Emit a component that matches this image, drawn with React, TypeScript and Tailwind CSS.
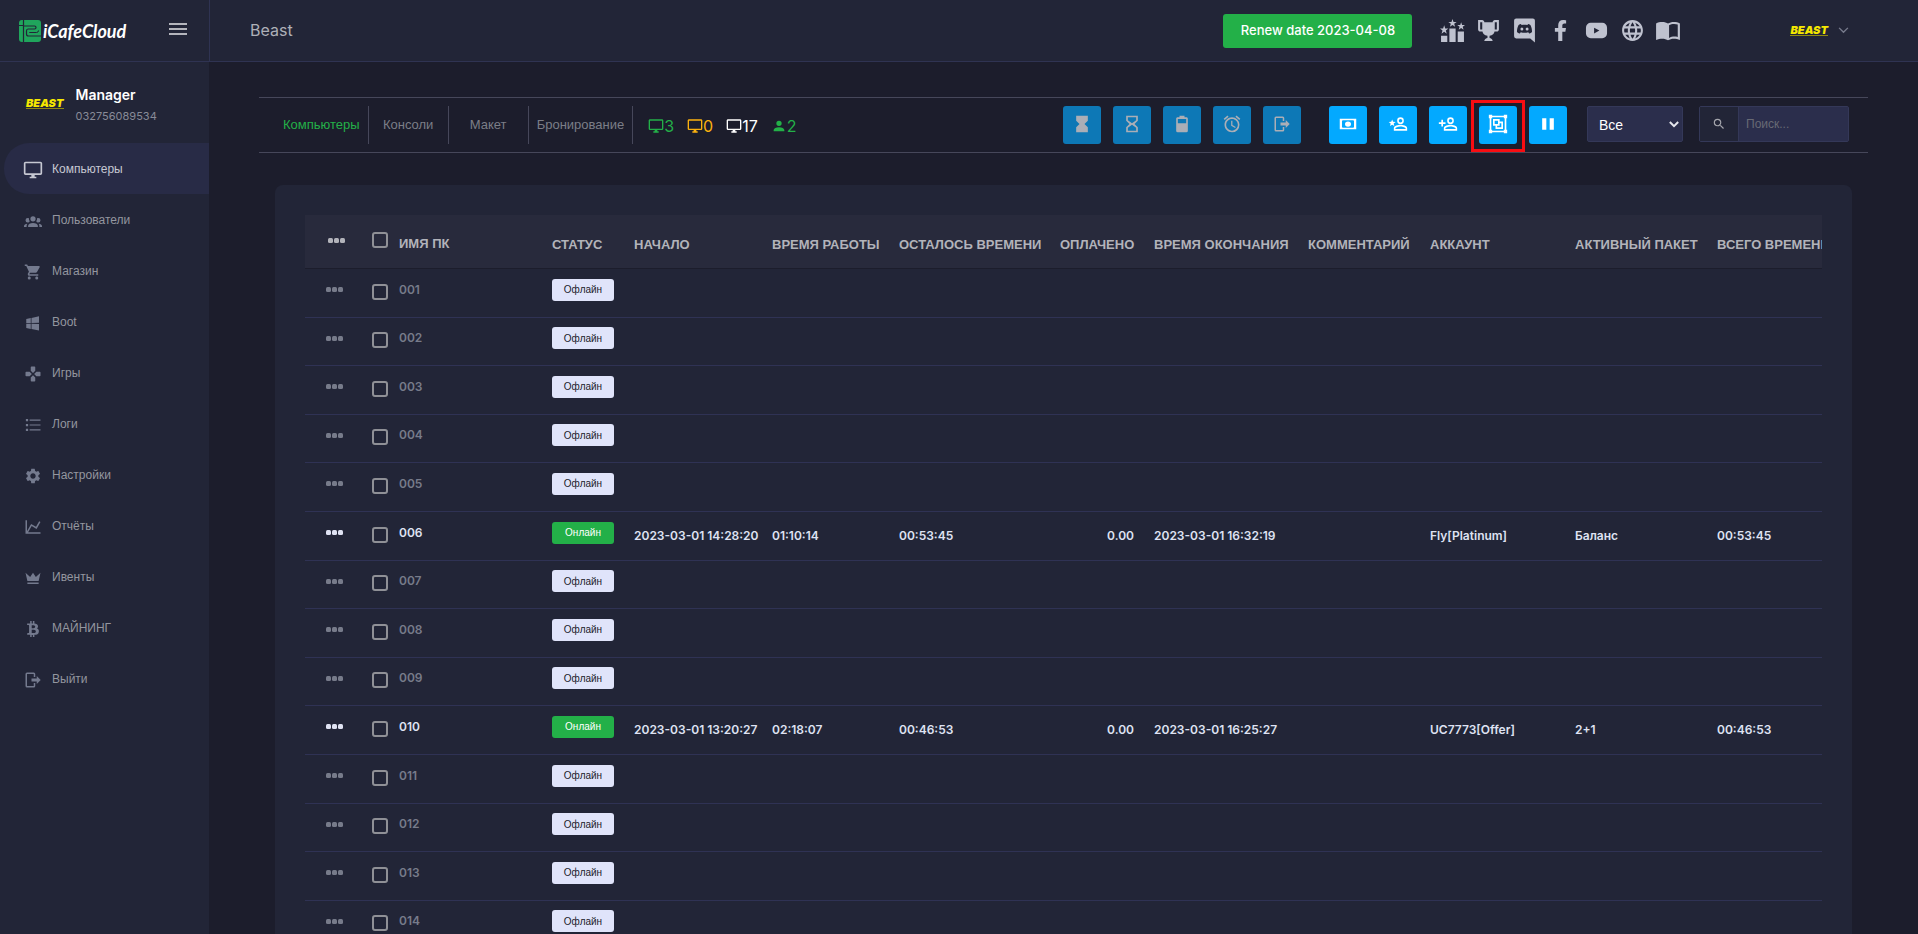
import {useState} from "react";
import type {ReactNode} from "react";
import {MdAlarm, MdLanguage, MdSearch, MdSettings} from "react-icons/md";
import {FaBtc, FaFacebookF} from "react-icons/fa";

const paths = {
    monitor: "M21,16H3V4H21M21,2H3C1.89,2 1,2.89 1,4V16A2,2 0 0,0 3,18H10V20H8V22H16V20H14V18H21A2,2 0 0,0 23,16V4C23,2.89 22.1,2 21,2Z",
    users: "M12,5.5A3.5,3.5 0 0,1 15.5,9A3.5,3.5 0 0,1 12,12.5A3.5,3.5 0 0,1 8.5,9A3.5,3.5 0 0,1 12,5.5M5,8C5.56,8 6.08,8.15 6.53,8.42C6.38,9.85 6.8,11.27 7.66,12.38C7.16,13.34 6.16,14 5,14A3,3 0 0,1 2,11A3,3 0 0,1 5,8M19,8A3,3 0 0,1 22,11A3,3 0 0,1 19,14C17.84,14 16.84,13.34 16.34,12.38C17.2,11.27 17.62,9.85 17.47,8.42C17.92,8.15 18.44,8 19,8M5.5,18.25C5.5,16.18 8.41,14.5 12,14.5C15.59,14.5 18.5,16.18 18.5,18.25V20H5.5V18.25M0,20V18.5C0,17.11 1.89,15.94 4.45,15.6C3.86,16.28 3.5,17.22 3.5,18.25V20H0M24,20H20.5V18.25C20.5,17.22 20.14,16.28 19.55,15.6C22.11,15.94 24,17.11 24,18.5V20Z",
    cart: "M17,18C15.89,18 15,18.89 15,20A2,2 0 0,0 17,22A2,2 0 0,0 19,20C19,18.89 18.1,18 17,18M1,2V4H3L6.6,11.59L5.24,14.04C5.09,14.32 5,14.65 5,15A2,2 0 0,0 7,17H19V15H7.42A0.25,0.25 0 0,1 7.17,14.75C7.17,14.7 7.18,14.66 7.2,14.63L8.1,13H15.55C16.3,13 16.96,12.58 17.3,11.97L20.88,5.5C20.95,5.34 21,5.17 21,5A1,1 0 0,0 20,4H5.21L4.27,2M7,18C5.89,18 5,18.89 5,20A2,2 0 0,0 7,22A2,2 0 0,0 9,20C9,18.89 8.1,18 7,18Z",
    windows: "M3,12V6.75L9,5.43V11.91L3,12M20,3V11.75L10,11.9V5.21L20,3M3,13L9,13.09V19.9L3,18.75V13M20,13.25V22L10,20.09V13.1L20,13.25Z",
    games: "M16.5,9L13.5,12L16.5,15H21A1,1 0 0,0 22,14V10A1,1 0 0,0 21,9M9,16.5V21A1,1 0 0,0 10,22H14A1,1 0 0,0 15,21V16.5L12,13.5M7.5,9H3A1,1 0 0,0 2,10V14A1,1 0 0,0 3,15H7.5L10.5,12M15,7.5V3A1,1 0 0,0 14,2H10A1,1 0 0,0 9,3V7.5L12,10.5Z",
    list: "M2.5,4H5.5V7H2.5M7.5,4.8H22V6.4H7.5M2.5,10.5H5.5V13.5H2.5M7.5,11.2H22V12.8H7.5M2.5,17H5.5V20H2.5M7.5,17.7H22V19.3H7.5Z",
    chart: "M16,11.78L20.24,4.45L21.97,5.45L16.74,14.5L10.23,10.75L5.46,19H22V21H2V3H4V17.54L9.5,8L16,11.78Z",
    crown: "M4.5,16L2,5L8.2,10.5L12,5L15.8,10.5L22,5L19.5,16H4.5M19.5,18V20H4.5V18Z",
    logout: "M17,17.25V14H10V10H17V6.75L22.25,12L17,17.25M13,2A2,2 0 0,1 15,4V8H13V4H4V20H13V16H15V20A2,2 0 0,1 13,22H4A2,2 0 0,1 2,20V4A2,2 0 0,1 4,2H13Z",
    hourglassFull: "M5,2H19V8L15,12L19,16V22H5V16L9,12L5,8Z",
    hourglass: "M5,2H19V8L15,12L19,16V22H5V16L9,12L5,8ZM17,16.5L12,12.8L7,16.5V20H17ZM12,11.2L17,7.5V4H7V7.5Z",
    battery: "M16.7,4H15V2H9V4H7.3A1.8,1.8 0 0,0 5,5.8V20.2A1.8,1.8 0 0,0 6.8,22H17.2A1.8,1.8 0 0,0 19,20.2V5.8A1.8,1.8 0 0,0 16.7,4M17,11H7V6H17Z",
    cash: "M1,5H23V19H1V5M4,8V16A3,3 0 0,0 5,17H19A3,3 0 0,0 20,16V8A3,3 0 0,0 19,7H5A3,3 0 0,0 4,8M12,8.5A4,3.5 0 0,1 12,15.5A4,3.5 0 0,1 12,8.5Z",
    addUser: "M15,4A4,4 0 0,0 11,8A4,4 0 0,0 15,12A4,4 0 0,0 19,8A4,4 0 0,0 15,4M15,5.9C16.16,5.9 17.1,6.84 17.1,8C17.1,9.16 16.16,10.1 15,10.1A2.1,2.1 0 0,1 12.9,8A2.1,2.1 0 0,1 15,5.9M4,7V10H1V12H4V15H6V12H9V10H6V7H4M15,13C12.33,13 7,14.33 7,17V20H23V17C23,14.33 17.67,13 15,13M15,14.9C17.97,14.9 21.1,16.36 21.1,17V18.1H8.9V17C8.9,16.36 12,14.9 15,14.9Z",
    starUser: "M15,4A4,4 0 0,0 11,8A4,4 0 0,0 15,12A4,4 0 0,0 19,8A4,4 0 0,0 15,4M15,5.9C16.16,5.9 17.1,6.84 17.1,8C17.1,9.16 16.16,10.1 15,10.1A2.1,2.1 0 0,1 12.9,8A2.1,2.1 0 0,1 15,5.9M5,6.5L6.1,9.3L9.2,9.5L6.8,11.5L7.6,14.5L5,12.8L2.4,14.5L3.2,11.5L0.8,9.5L3.9,9.3ZM15,13C12.33,13 7,14.33 7,17V20H23V17C23,14.33 17.67,13 15,13M15,14.9C17.97,14.9 21.1,16.36 21.1,17V18.1H8.9V17C8.9,16.36 12,14.9 15,14.9Z",
    group: "M1,1H5V2H19V1H23V5H22V19H23V23H19V22H5V23H1V19H2V5H1V1M5,4V5H4V19H5V20H19V19H20V5H19V4H5M6,6H14V9H18V18H9V14H6V6M8,8V12H12V8H8M14,11V14H11V16H16V11H14Z",
    pause: "M14,19H19V5H14M5,19H10V5H5V19Z",
    account: "M12,4A4,4 0 0,1 16,8A4,4 0 0,1 12,12A4,4 0 0,1 8,8A4,4 0 0,1 12,4M12,14C16.42,14 20,15.79 20,18V20H4V18C4,15.79 7.58,14 12,14Z",
    ranking: "M1,17H7V23H1ZM9,10H15V23H9ZM17,13H23V23H17ZM4,7L5,10L8,10L5.6,12L6.5,15L4,13.2L1.5,15L2.4,12L0,10L3,10ZM12,1L13,3.8L16,3.8L13.6,5.6L14.5,8.5L12,6.8L9.5,8.5L10.4,5.6L8,3.8L11,3.8ZM20.3,4L21.2,6.7L24,6.7L21.8,8.5L22.6,11.3L20.3,9.6L18,11.3L18.8,8.5L16.6,6.7L19.4,6.7Z",
    trophy: "M20.2,2H19.5H18C17.1,2 16,3 16,4H8C8,3 6.9,2 6,2H4.5H3.8H2V11C2,12 3,13 4,13H6.2C6.6,15 7.9,16.7 11,17V19.08C8,19.54 8,22 8,22H16C16,22 16,19.54 13,19.08V17C16.1,16.7 17.4,15 17.8,13H20C21,13 22,12 22,11V2H20.2M4,11V4H6V11H4M20,11H18V4H20V11Z",
    discord: "M4,0.5H20A2,2 0 0,1 22,2.5V23.5L17.5,19.6H4A2,2 0 0,1 2,17.6V2.5A2,2 0 0,1 4,0.5M8.6,5.8C6.9,6.2 6.2,6.9 6.2,6.9C5.2,9 4.7,11.3 4.8,13.4C5.8,14.7 7.5,14.8 7.5,14.8L8.4,13.6C10.8,14.3 13.2,14.3 15.6,13.6L16.5,14.8C16.5,14.8 18.2,14.7 19.2,13.4C19.3,11.3 18.8,9 17.8,6.9C17.8,6.9 17.1,6.2 15.4,5.8L14.8,6.6C13,6.3 11,6.3 9.2,6.6ZM9.5,9A1.4,1.5 0 0,1 9.5,12A1.4,1.5 0 0,1 9.5,9M14.5,9A1.4,1.5 0 0,1 14.5,12A1.4,1.5 0 0,1 14.5,9Z",
    youtube: "M6,4H18A5,5 0 0,1 23,9V15A5,5 0 0,1 18,20H6A5,5 0 0,1 1,15V9A5,5 0 0,1 6,4M9.5,9V15L15,12Z",
    book: "M12,5C10.9,4.2 8.7,3.6 6.7,3.6C4.6,3.6 2.5,4 1,5V20.2C2.8,19.4 4.8,19.1 6.7,19.1C8.7,19.1 10.6,19.6 12,20.6C13.7,19.6 15.3,19.1 17.3,19.1C19.3,19.1 21.3,19.4 23,20.2V5C21.5,4 19.4,3.6 17.3,3.6C15.3,3.6 13.4,4.2 12,5M21,17.5C18,16.8 15.2,17.2 13,18.4V6.6C15,5.4 18.5,5.2 21,6Z",
};

type IconName = keyof typeof paths;

function Icon({name, className}: {name: IconName, className: string}){
    return (
        <svg viewBox="0 0 24 24" fill="currentColor" fillRule="evenodd" className={className} aria-hidden="true">
            <path d={paths[name]}/>
        </svg>
    );
}

function BeastLogo(){
    return (
        <span className="inline-block border-b border-[#8f8a12] font-['Inter',sans-serif] text-[11px] leading-[9px] font-black italic text-[#f5e800]">
            BEAST
        </span>
    );
}

const menu: {label: string, icon: ReactNode}[] = [
    {label: "Компьютеры", icon: <Icon name="monitor" className="size-5"/>},
    {label: "Пользователи", icon: <Icon name="users" className="size-[18px]"/>},
    {label: "Магазин", icon: <Icon name="cart" className="size-[18px]"/>},
    {label: "Boot", icon: <Icon name="windows" className="size-[18px]"/>},
    {label: "Игры", icon: <Icon name="games" className="size-[18px]"/>},
    {label: "Логи", icon: <Icon name="list" className="size-[18px]"/>},
    {label: "Настройки", icon: <MdSettings className="size-[18px]"/>},
    {label: "Отчёты", icon: <Icon name="chart" className="size-[18px]"/>},
    {label: "Ивенты", icon: <Icon name="crown" className="size-[18px]"/>},
    {label: "МАЙНИНГ", icon: <FaBtc className="size-4"/>},
    {label: "Выйти", icon: <Icon name="logout" className="size-[18px]"/>},
];

const tabs = ["Компьютеры", "Консоли", "Макет", "Бронирование"];

const links: {label: string, icon: ReactNode}[] = [
    {label: "Ranking", icon: <Icon name="ranking" className="size-[25px]"/>},
    {label: "Trophy", icon: <Icon name="trophy" className="size-[25px]"/>},
    {label: "Discord", icon: <Icon name="discord" className="size-[25px]"/>},
    {label: "Facebook", icon: <FaFacebookF className="size-[21px]"/>},
    {label: "YouTube", icon: <Icon name="youtube" className="size-[23px]"/>},
    {label: "Site", icon: <MdLanguage className="size-[25px]"/>},
    {label: "Docs", icon: <Icon name="book" className="size-[26px]"/>},
];

const sessionActions: {label: string, icon: ReactNode}[] = [
    {label: "Start", icon: <Icon name="hourglassFull" className="size-5"/>},
    {label: "Add time", icon: <Icon name="hourglass" className="size-5"/>},
    {label: "Package", icon: <Icon name="battery" className="size-5"/>},
    {label: "Timer", icon: <MdAlarm className="size-5"/>},
    {label: "Checkout", icon: <Icon name="logout" className="size-[18px]"/>},
];

const clubActions: {label: string, icon: ReactNode, marked?: boolean}[] = [
    {label: "Cash", icon: <Icon name="cash" className="size-[18px]"/>},
    {label: "Add member", icon: <Icon name="starUser" className="size-5"/>},
    {label: "Add guest", icon: <Icon name="addUser" className="size-5"/>},
    {label: "Group", icon: <Icon name="group" className="size-5"/>, marked: true},
    {label: "Pause", icon: <Icon name="pause" className="size-5"/>},
];

const columns = [
    {title: "СТАТУС", width: "w-[82px]"},
    {title: "НАЧАЛО", width: "w-[138px]"},
    {title: "ВРЕМЯ РАБОТЫ", width: "w-[127px]"},
    {title: "ОСТАЛОСЬ ВРЕМЕНИ", width: "w-[161px]"},
    {title: "ОПЛАЧЕНО", width: "w-[94px]"},
    {title: "ВРЕМЯ ОКОНЧАНИЯ", width: "w-[154px]"},
    {title: "КОММЕНТАРИЙ", width: "w-[122px]"},
    {title: "АККАУНТ", width: "w-[145px]"},
    {title: "АКТИВНЫЙ ПАКЕТ", width: "w-[142px]"},
    {title: "ВСЕГО ВРЕМЕНИ", width: "w-[160px]"},
];

// start, worked, left, paid, end, comment, account, package, total
const sessions: Record<string, string[]> = {
    "006": ["2023-03-01 14:28:20", "01:10:14", "00:53:45", "0.00", "2023-03-01 16:32:19", "", "Fly[Platinum]", "Баланс", "00:53:45"],
    "010": ["2023-03-01 13:20:27", "02:18:07", "00:46:53", "0.00", "2023-03-01 16:25:27", "", "UC7773[Offer]", "2+1", "00:46:53"],
};

const computers = Array.from({length: 14}, (_, i) => String(i + 1).padStart(3, "0"));

function Dots(){
    return (
        <svg viewBox="0 0 17 5" fill="currentColor" className="h-[5px] w-[17px]" aria-hidden="true">
            <rect width="5" height="5" rx="1.5"/>
            <rect x="6" width="5" height="5" rx="1.5"/>
            <rect x="12" width="5" height="5" rx="1.5"/>
        </svg>
    );
}

const checkboxClass = "size-4 shrink-0 appearance-none rounded-[3px] border-2 border-[#8f9096] checked:bg-[#03a9ff]";

function Header(){
    return (
        <header className="flex h-[62px] shrink-0 items-stretch border-b border-[#2f3352] bg-[#222537]">
            <div className="flex w-[210px] items-center justify-between border-r border-[#2f3352] pr-[22px] pb-3 pl-[19px]">
                <a href="#" className="flex items-center gap-0.5 pt-3 font-['Lato',sans-serif] text-lg leading-6 font-bold italic text-white">
                    <svg viewBox="0 0 22 22" className="size-[22px]" aria-hidden="true">
                        <rect width="22" height="22" rx="3" fill="#20a55c"/>
                        <path d="M4.5 0v22M0 5.5h4.5M4.5 6H15.5q1.5 0 1.5 1.5t-1.5 1.5H9q-1.5 0-1.5 2v3q0 2 2 2H22M4.5 0v6" fill="none" stroke="#222537" strokeWidth="1.2"/>
                        <path d="M10.5 13v-.5h7q2 0 2-2" fill="none" stroke="#222537" strokeWidth="1"/>
                    </svg>
                    iCafeCloud
                </a>
                <button aria-label="Menu" className="flex w-[18px] flex-col gap-[3px] pt-2">
                    <span className="h-0.5 w-full bg-[#b4b5bc]"/>
                    <span className="h-0.5 w-full bg-[#b4b5bc]"/>
                    <span className="h-0.5 w-full bg-[#b4b5bc]"/>
                </button>
            </div>
            <div className="flex flex-1 items-center justify-between pl-10 pr-[69px]">
                <h1 className="pb-0.5 font-['Inter',sans-serif] text-base text-[#aeb0b8]">Beast</h1>
                <div className="flex items-center">
                    <button className="h-[34px] w-[189px] rounded-[3px] bg-[#23b048] font-['Inter',sans-serif] text-[13px] font-medium text-white">
                        Renew date 2023-04-08
                    </button>
                    <nav className="ml-[22px] flex text-[#bfc2cf]">
                        {links.map((link) => (
                            <a key={link.label} href="#" aria-label={link.label} className="flex w-9 items-center justify-center">{link.icon}</a>
                        ))}
                    </nav>
                    <button className="ml-[104px] flex items-center gap-2.5">
                        <BeastLogo/>
                        <svg viewBox="0 0 12 8" className="h-[7px] w-[11px]" fill="none" stroke="#777b8c" strokeWidth="1.6" aria-hidden="true">
                            <path d="M1 1l5 5 5-5"/>
                        </svg>
                    </button>
                </div>
            </div>
        </header>
    );
}

function Sidebar(){
    return (
        <aside className="w-[209px] shrink-0 bg-[#222537] pt-[22px]">
            <div className="mb-5 flex h-[39px] items-center gap-3 pl-[26px]">
                <BeastLogo/>
                <div className="pt-0.5 font-['Inter',sans-serif]">
                    <div className="text-sm leading-[22px] font-semibold text-white">Manager</div>
                    <div className="text-[11px] leading-[20px] text-[#888b98]">032756089534</div>
                </div>
            </div>
            <nav className="pl-1">
                {menu.map((item, i) => (
                    <a
                        key={item.label}
                        href="#"
                        className={i === 0
                            ? "flex h-[51px] items-center rounded-l-[25px] bg-[#282b46] pl-[19px] text-xs text-[#c6c8d2]"
                            : "flex h-[51px] items-center pl-[19px] text-xs text-[#94969f]"}
                    >
                        <span className={i === 0 ? "mr-[9px] flex w-5 justify-center pt-0.5" : "mr-[9px] flex w-5 justify-center pt-0.5 text-[#747a8e]"}>{item.icon}</span>
                        {item.label}
                    </a>
                ))}
            </nav>
        </aside>
    );
}

function Toolbar(){
    const [tab, setTab] = useState(tabs[0]);
    const [filter, setFilter] = useState("Все");
    const [search, setSearch] = useState("");

    return (
        <div className="flex items-start border-y border-[#46475a] py-2 pr-[19px] pl-4">
            <div className="flex">
                {tabs.map((name) => (
                    <button
                        key={name}
                        onClick={() => setTab(name)}
                        className={name === tab
                            ? "h-[38px] min-w-20 border-r border-[#46475a] px-2 text-[13px] text-[#23b048]"
                            : "h-[38px] min-w-20 border-r border-[#46475a] px-2 text-[13px] text-[#7b7d87]"}
                    >
                        {name}
                    </button>
                ))}
            </div>
            <div className="flex h-[38px] items-center gap-[13px] pt-0.5 pl-[15px] font-['Inter',sans-serif] text-base">
                <span className="flex items-center text-[#23b048]"><Icon name="monitor" className="size-4"/>3</span>
                <span className="flex items-center text-[#fbb10f]"><Icon name="monitor" className="size-4"/>0</span>
                <span className="flex items-center text-white"><Icon name="monitor" className="size-4"/>17</span>
                <span className="flex items-center text-[#23b048]"><Icon name="account" className="size-4"/>2</span>
            </div>
            <div className="ml-auto flex gap-3">
                {sessionActions.map((action) => (
                    <button key={action.label} aria-label={action.label} className="flex size-[38px] items-center justify-center rounded-[3px] bg-[#0d78b6] pb-0.5 text-[#abaeb6]">
                        {action.icon}
                    </button>
                ))}
            </div>
            <div className="ml-7 flex gap-3">
                {clubActions.map((action) => (
                    <div key={action.label} className="relative">
                        <button aria-label={action.label} className="flex size-[38px] items-center justify-center rounded-[3px] bg-[#03a9ff] pb-0.5 text-white">
                            {action.icon}
                        </button>
                        {action.marked && <div className="pointer-events-none absolute -inset-x-2 -top-1.5 -bottom-2 border-[3px] border-[#f80d12]"/>}
                    </div>
                ))}
            </div>
            <div className="relative ml-5">
                <select
                    aria-label="Фильтр"
                    value={filter}
                    onChange={(e) => setFilter(e.target.value)}
                    className="h-9 w-24 appearance-none rounded-[2px] border border-[#343858] bg-[#2b2e4c] pt-0.5 pl-[11px] text-sm text-white"
                >
                    <option>Все</option>
                </select>
                <svg viewBox="0 0 12 8" className="pointer-events-none absolute top-[15px] right-1 h-[7px] w-2.5" fill="none" stroke="#e6e7ee" strokeWidth="2.4" aria-hidden="true">
                    <path d="M1 1l5 5 5-5"/>
                </svg>
            </div>
            <div className="ml-4 flex h-9 w-[150px] rounded-[2px] border border-[#343858]">
                <button aria-label="Найти" className="flex w-[39px] shrink-0 items-center justify-center border-r border-[#343858] bg-[#222537] text-[#a5a6ad]">
                    <MdSearch className="size-3.5"/>
                </button>
                <input
                    type="text"
                    aria-label="Поиск"
                    value={search}
                    onChange={(e) => setSearch(e.target.value)}
                    placeholder="Поиск..."
                    className="w-full min-w-0 bg-[#2b2e4c] px-[7px] text-xs text-white outline-none placeholder:text-[#686a74]"
                />
            </div>
        </div>
    );
}

function ComputerRow({name}: {name: string}){
    const session = sessions[name];

    return (
        <tr className={session
            ? "h-[49px] border-b border-[#2f3254] text-[#dfe2f2] nth-[5n+2]:h-12 nth-[5n+4]:h-12"
            : "h-[49px] border-b border-[#2f3254] text-[#777b8a] nth-[5n+2]:h-12 nth-[5n+4]:h-12"}>
            <td className="pb-1.5 pl-[21px]"><button aria-label={"Меню " + name} className="block"><Dots/></button></td>
            <td className="pb-0.5 pl-2.5">
                <label className="flex items-center gap-[11px] font-['Inter',sans-serif] text-xs font-semibold">
                    <input type="checkbox" className={checkboxClass}/>
                    <span className="pb-1">{name}</span>
                </label>
            </td>
            <td className="pb-1.5 pl-2.5">
                <span className={session
                    ? "flex h-[22px] w-[62px] items-center justify-center rounded-[3px] bg-[#23b048] text-[10px] text-white"
                    : "flex h-[22px] w-[62px] items-center justify-center rounded-[3px] bg-[#e0e4fa] text-[10px] text-[#1c1d2c]"}>
                    {session ? "Онлайн" : "Офлайн"}
                </span>
            </td>
            {columns.slice(1).map((column, i) => (
                <td
                    key={column.title}
                    className={i === 3
                        ? "px-2.5 text-right font-['Inter','Liberation_Sans',sans-serif] text-xs font-semibold whitespace-nowrap"
                        : "pl-2.5 font-['Inter','Liberation_Sans',sans-serif] text-xs font-semibold whitespace-nowrap"}
                >
                    {session ? session[i] : ""}
                </td>
            ))}
        </tr>
    );
}

export default function App(){
    return (
        <div className="flex h-screen flex-col overflow-hidden bg-[#1c1d2c] font-['Liberation_Sans',Arial,sans-serif]">
            <Header/>
            <div className="flex min-h-0 flex-1">
                <Sidebar/>
                <main className="min-w-0 flex-1 px-[50px] pt-[35px]">
                    <Toolbar/>
                    <section className="mx-4 mt-8 rounded-lg bg-[#222537] p-[30px]">
                        <div className="overflow-hidden">
                            <table className="w-[1562px] table-fixed">
                                <thead>
                                    <tr className="h-[53px] border-b border-[#1c1d2c] bg-[#282a3c] text-left text-[13px] text-[#b2b3ba]">
                                        <th className="w-[57px] pb-0.5 pl-[23px]"><Dots/></th>
                                        <th className="w-[180px] pb-0.5 pl-2.5">
                                            <label className="flex items-center gap-[11px]">
                                                <input type="checkbox" className={checkboxClass}/>
                                                <span className="pt-1.5">ИМЯ ПК</span>
                                            </label>
                                        </th>
                                        {columns.map((column) => (
                                            <th key={column.title} className={column.width + " pt-1.5 pl-2.5 whitespace-nowrap"}>{column.title}</th>
                                        ))}
                                    </tr>
                                </thead>
                                <tbody>
                                    {computers.map((name) => <ComputerRow key={name} name={name}/>)}
                                </tbody>
                            </table>
                        </div>
                    </section>
                </main>
            </div>
        </div>
    );
}
